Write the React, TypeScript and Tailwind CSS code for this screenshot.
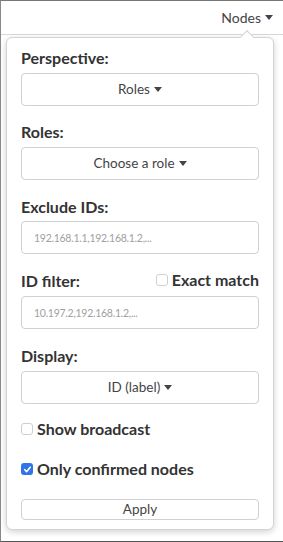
const font = { fontFamily: '"Lato", "Liberation Sans", sans-serif' }

function Caret() {
  return (
    <svg width="8" height="5" viewBox="0 0 8 5" className="inline-block ml-1 fill-current">
      <path d="M0 0h8L4 5z" />
    </svg>
  )
}

function Label({ children }: { children: React.ReactNode }) {
  return <div className="text-[16px] font-bold text-[#333] leading-5">{children}</div>
}

function DropButton({ text }: { text: string }) {
  return (
    <button className="w-full h-[33px] mt-[5px] rounded border border-[#d0d0d0] bg-white text-[13.5px] text-[#444] flex items-center justify-center">
      {text}
      <Caret />
    </button>
  )
}

function TextInput({ placeholder }: { placeholder: string }) {
  return (
    <input
      className="w-full h-[33px] rounded border border-[#d0d0d0] bg-white px-3 text-[10.5px] tracking-tight text-[#333] placeholder:text-[#a0a0a0] outline-none"
      placeholder={placeholder}
    />
  )
}

function Box({ checked }: { checked?: boolean }) {
  if (checked)
    return (
      <span className="w-3 h-3 rounded-[3px] bg-[#2f74e8] flex items-center justify-center shrink-0">
        <svg width="9" height="9" viewBox="0 0 10 10" fill="none" stroke="white" strokeWidth="1.8" strokeLinecap="round" strokeLinejoin="round">
          <path d="M2 5.2l2 2.3L8 2.5" />
        </svg>
      </span>
    )
  return <span className="w-3 h-3 rounded-[3px] border border-[#cfcfcf] bg-white shrink-0" />
}

export default function App() {
  return (
    <div style={font} className="h-[542px] w-[283px] border-t border-l border-b border-t-[#777] border-l-[#888] border-b-[#555] bg-white relative overflow-hidden">
      {/* top bar */}
      <div className="h-[34px] border-b border-[#d8d8d8] flex items-center justify-end pr-[10px]">
        <span className="text-[14px] text-[#444] flex items-center">
          Nodes
          <Caret />
        </span>
      </div>

      {/* popover */}
      <div className="relative ml-[5px] mr-[9px] mt-[2px] rounded-md border border-[#d4d4d4] bg-white shadow-[0_2px_6px_rgba(0,0,0,0.18)] px-[14px] pt-[10px] pb-[9px]">
        <div className="absolute -top-[6px] left-[235px] w-[10px] h-[10px] rotate-45 bg-white border-t border-l border-[#d4d4d4]" />

        <Label>Perspective:</Label>
        <DropButton text="Roles" />

        <div className="mt-[16px]">
          <Label>Roles:</Label>
        </div>
        <DropButton text="Choose a role" />

        <div className="mt-[17px] mb-[4px]">
          <Label>Exclude IDs:</Label>
        </div>
        <TextInput placeholder="192.168.1.1,192.168.1.2,..." />

        <div className="mt-[17px] mb-[5px] flex items-center justify-between">
          <Label>ID filter:</Label>
          <label className="flex items-center gap-[4px] text-[16px] font-bold text-[#333] leading-5 -mt-[3px]">
            <Box />
            Exact match
          </label>
        </div>
        <TextInput placeholder="10.197.2,192.168.1.2,..." />

        <div className="mt-[17px]">
          <Label>Display:</Label>
        </div>
        <DropButton text="ID (label)" />

        <label className="mt-[15px] flex items-center gap-[4px] text-[16px] font-bold text-[#333] leading-5">
          <Box />
          Show broadcast
        </label>

        <label className="mt-[20px] flex items-center gap-[4px] text-[16px] font-bold text-[#333] leading-5">
          <Box checked />
          Only confirmed nodes
        </label>

        <button className="w-full h-[21px] mt-[20px] rounded border border-[#d0d0d0] bg-white text-[13.5px] text-[#444] flex items-center justify-center">
          Apply
        </button>
      </div>
    </div>
  )
}
